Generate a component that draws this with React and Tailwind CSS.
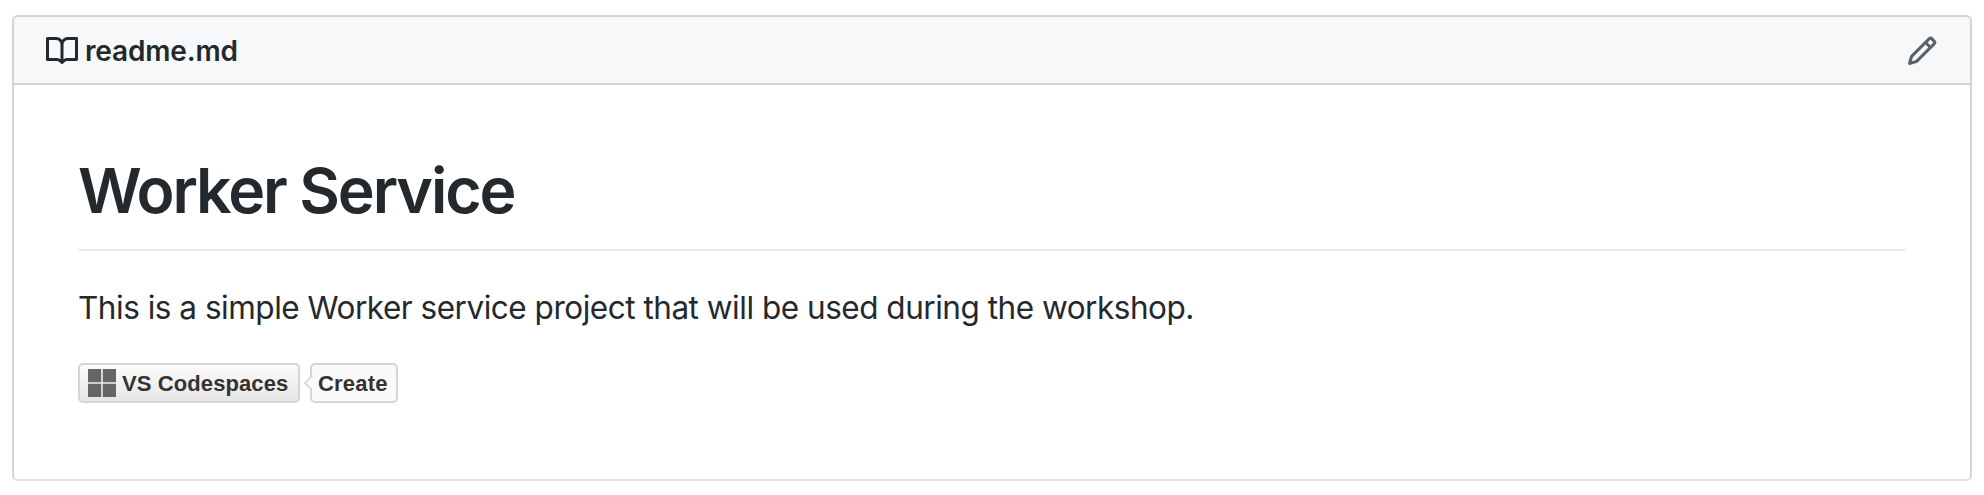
function BookIcon() {
  return (
    <svg className="size-8 shrink-0" viewBox="0 0 16 16" fill="#24292e" fillRule="evenodd" aria-hidden="true">
      <path d="M0 1.75A.75.75 0 01.75 1h4.253c1.227 0 2.317.59 3 1.501A3.744 3.744 0 0111.006 1h4.245a.75.75 0 01.75.75v10.5a.75.75 0 01-.75.75h-4.507a2.25 2.25 0 00-1.591.659l-.622.621a.75.75 0 01-1.06 0l-.622-.621A2.25 2.25 0 005.258 13H.75a.75.75 0 01-.75-.75V1.75zm8.755 3a2.25 2.25 0 012.25-2.25H14.5v9h-3.757c-.71 0-1.4.201-1.992.572l.004-7.322zm-1.504 7.324l.004-5.073-.002-2.253A2.25 2.25 0 005.003 2.5H1.5v9h3.757a3.75 3.75 0 011.994.574z" />
    </svg>
  );
}

function PencilIcon() {
  return (
    <svg className="size-8" viewBox="0 0 16 16" fill="#586069" fillRule="evenodd" aria-hidden="true">
      <path d="M11.013 1.427a1.75 1.75 0 012.474 0l1.086 1.086a1.75 1.75 0 010 2.474l-8.61 8.61c-.21.21-.47.364-.756.445l-3.251.93a.75.75 0 01-.927-.928l.929-3.25a1.75 1.75 0 01.445-.758l8.61-8.61zm1.414 1.06a.25.25 0 00-.354 0L10.811 3.75l1.439 1.44 1.263-1.263a.25.25 0 000-.354l-1.086-1.086zM11.189 6.25L9.75 4.81l-6.286 6.287a.25.25 0 00-.064.108l-.558 1.953 1.953-.558a.249.249 0 00.108-.064l6.286-6.286z" />
    </svg>
  );
}

function WindowsIcon() {
  return (
    <svg className="size-7 shrink-0" viewBox="0 0 28 28" fill="#666" aria-hidden="true">
      <path d="M0 0h13.2v13.2H0zM14.8 0H28v13.2H14.8zM0 14.8h13.2V28H0zM14.8 14.8H28V28H14.8z" />
    </svg>
  );
}

function CodespacesBadge() {
  return (
    <a
      href="#"
      className="flex w-fit gap-2.5 font-['Liberation_Sans',Arial,sans-serif] text-[22px] leading-[36px] font-bold text-[#333]"
    >
      <span className="flex h-10 w-[222px] items-center gap-1.5 rounded-[5px] border-2 border-[#d5d5d5] bg-linear-to-b from-[#fcfcfc] to-[#e6e6e6] pl-2">
        <WindowsIcon />
        <span className="pt-0.5 tracking-[0.1px] whitespace-nowrap">VS Codespaces</span>
      </span>
      <span className="relative flex h-10 w-[88px] items-center rounded-[5px] border-2 border-[#d5d5d5] bg-[#fafafa] pl-1.5">
        <svg className="absolute top-[10px] -left-2 h-4 w-2.5" viewBox="0 0 10 16" aria-hidden="true">
          <path d="M8 1h2v14H8z" fill="#fafafa" />
          <path d="M8 1L1 8l7 7" fill="#fafafa" stroke="#d5d5d5" strokeWidth="1.6" />
        </svg>
        <span className="pt-0.5 tracking-[0.2px]">Create</span>
      </span>
    </a>
  );
}

export default function App() {
  return (
    <main className="h-[495px] bg-white px-3 pt-[15px] font-[Inter,sans-serif] text-[#24292e]">
      <section className="h-[466px] rounded-md border-2 border-[#d1d5da] border-b-[#e1e4e8]">
        <header className="flex h-[68px] items-center justify-between rounded-t border-b-2 border-[#d1d5da] bg-[#f6f8fa] px-8 pt-0.5">
          <h2 className="flex items-center gap-[7px] text-[28px] leading-[42px] font-semibold">
            <BookIcon />
            <span className="tracking-[-0.15px]">readme.md</span>
          </h2>
          <button type="button" aria-label="Edit">
            <PencilIcon />
          </button>
        </header>
        <article className="px-16 pt-[65px]">
          <h1 className="border-b-2 border-[#eaecef] pb-[19px] text-[62.5px] leading-[80px] font-semibold tracking-[-2.12px]">
            Worker Service
          </h1>
          <p className="mt-[33px] text-[31.5px] leading-[48px] tracking-[-0.48px]">
            This is a simple Worker service project that will be used during the workshop.
          </p>
          <div className="mt-[31px]">
            <CodespacesBadge />
          </div>
        </article>
      </section>
    </main>
  );
}
